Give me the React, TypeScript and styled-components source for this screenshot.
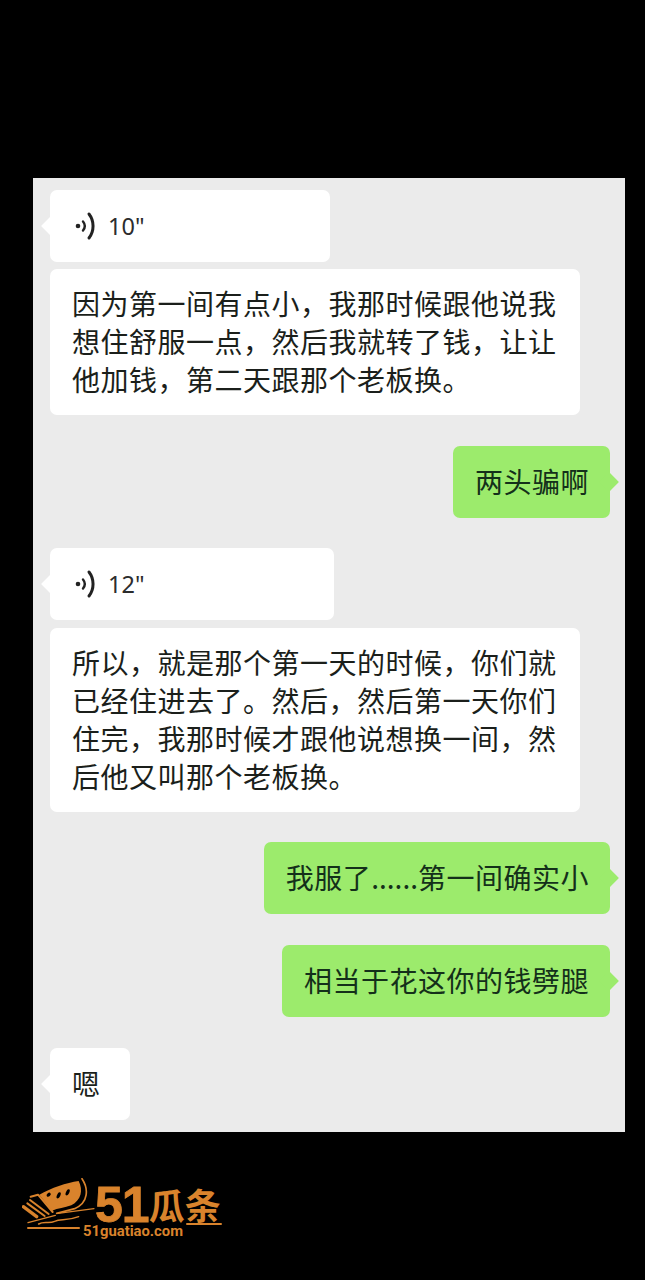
import React from "react";
import styled, { createGlobalStyle, css } from "styled-components";

const Global = createGlobalStyle`
  html, body {
    margin: 0;
    background: #000;
  }
`;

const Page = styled.div`
  width: 645px;
  height: 1280px;
  padding: 178px 20px 0 33px;
  box-sizing: border-box;
  background: #000;
  overflow: hidden;
`;

const Chat = styled.div`
  height: 954px;
  padding: 12px 15px 0 17px;
  box-sizing: border-box;
  background: #ebebeb;
  display: flex;
  flex-direction: column;
`;

const Row = styled.div<{ $mine?: boolean; $gap: number }>`
  display: flex;
  justify-content: ${(p) => (p.$mine ? "flex-end" : "flex-start")};
  margin-top: ${(p) => p.$gap}px;
`;

const Bubble = styled.div<{ $mine?: boolean; $width?: number; $tail?: boolean }>`
  position: relative;
  box-sizing: border-box;
  min-height: 72px;
  width: ${(p) => (p.$width ? `${p.$width}px` : "auto")};
  padding: 15px 21px 17px 22px;
  display: flex;
  align-items: center;
  border-radius: 7px;
  font-family: "Noto Sans CJK SC", "Noto Sans", sans-serif;
  font-size: 28px;
  font-weight: 400;
  letter-spacing: 0.5px;
  line-height: 38px;
  color: ${(p) => (p.$mine ? "#14301a" : "#1b1f1b")};
  background: ${(p) => (p.$mine ? "#9ceb6c" : "#fff")};
  ${(p) =>
    p.$tail &&
    css`
      &::after {
        content: "";
        position: absolute;
        top: 29px;
        width: 14px;
        height: 14px;
        background: inherit;
        transform: rotate(45deg);
        ${p.$mine ? "right: -6px;" : "left: -6px;"}
      }
    `}
`;

const Dots = styled.span`
  letter-spacing: 0;
`;

const VoiceLength = styled.span`
  margin: 2px 0 0 12px;
  font-family: "Noto Sans", sans-serif;
  font-size: 23.5px;
  letter-spacing: 0;
  line-height: 38px;
  color: #2c2c2c;
`;

const VoiceGlyph = styled.svg`
  margin-top: 2px;
  flex-shrink: 0;
`;

const Footer = styled.div`
  margin: 46px 0 0 -11px;
  width: 202px;
`;

const LogoTop = styled.div`
  display: flex;
  align-items: center;
  height: 47px;
  white-space: nowrap;
  color: #d9832c;
`;

const LogoNumber = styled.span`
  font-family: "Liberation Sans", sans-serif;
  font-size: 50px;
  font-weight: 700;
  letter-spacing: -1px;
  line-height: 47px;
  margin-top: 7px;
  -webkit-text-stroke: 0.8px #d9832c;
`;

const LogoName = styled.span`
  font-family: "Noto Sans CJK SC", sans-serif;
  font-size: 36px;
  font-weight: 700;
  line-height: 47px;
  margin-top: 6px;
`;

const LogoBottom = styled.div`
  display: flex;
  align-items: center;
  gap: 3px;
  margin: 0 0 0 5px;
  color: #d9832c;
`;

const LogoRule = styled.div<{ $width: number; $lift: number }>`
  width: ${(p) => p.$width}px;
  height: 2px;
  transform: translateY(-${(p) => p.$lift}px);
  background: #d9832c;
  border-radius: 1px;
`;

const LogoDomain = styled.span`
  font-family: "Roboto", "Liberation Sans", sans-serif;
  font-size: 14.8px;
  font-weight: 700;
  line-height: 12px;
`;

const VoiceIcon = () => (
  <VoiceGlyph width="24" height="30" viewBox="0 0 24 30" fill="none" stroke="#222" strokeLinecap="round">
    <circle cx="6" cy="15" r="2.3" fill="#222" stroke="none" />
    <path d="M11 10.5c2.2 2.7 2.2 6.3 0 9" strokeWidth="2.4" />
    <path d="M17 3c5.4 7 5.4 17 0 24" strokeWidth="3" />
  </VoiceGlyph>
);

const LogoMark = () => (
  <svg width="73" height="47" viewBox="12 18 219 141" style={{ flexShrink: 0 }}>
    <path d="M64 68 C100 48 145 32 182 27 C196 55 190 84 160 100 C140 108 120 108 102 116 Z" fill="#d9832c" />
    <ellipse cx="92" cy="68" rx="5" ry="7" fill="#000" transform="rotate(50 92 68)" />
    <ellipse cx="122" cy="70" rx="5" ry="10" fill="#000" transform="rotate(25 122 70)" />
    <ellipse cx="149" cy="61" rx="5" ry="10" fill="#000" transform="rotate(25 149 61)" />
    <g fill="none" stroke="#d9832c" strokeLinecap="round" strokeLinejoin="round">
      <path d="M192 20 C212 50 212 92 170 110 L116 124" strokeWidth="5" />
      <path d="M120 124 L228 110" strokeWidth="3.5" />
      <path d="M38 74 L60 68 L104 120" strokeWidth="6" />
      <path d="M36 84 L92 126" strokeWidth="6" />
      <path d="M28 94 L80 132" strokeWidth="6" />
      <path d="M16 104 L56 134" strokeWidth="10" />
      <path d="M30 152 L112 130" strokeWidth="4" />
      <path d="M62 156 C78 146 92 156 110 148 C128 140 146 148 182 134" strokeWidth="4.5" />
    </g>
  </svg>
);

export default function App() {
  return (
    <Page>
      <Global />
      <Chat>
        <Row $gap={0}>
          <Bubble $width={280} $tail>
            <VoiceIcon />
            <VoiceLength>10"</VoiceLength>
          </Bubble>
        </Row>
        <Row $gap={7}>
          <Bubble $width={530}>
            因为第一间有点小，我那时候跟他说我想住舒服一点，然后我就转了钱，让让他加钱，第二天跟那个老板换。
          </Bubble>
        </Row>
        <Row $gap={31} $mine>
          <Bubble $mine $tail>两头骗啊</Bubble>
        </Row>
        <Row $gap={30}>
          <Bubble $width={284} $tail>
            <VoiceIcon />
            <VoiceLength>12"</VoiceLength>
          </Bubble>
        </Row>
        <Row $gap={8}>
          <Bubble $width={530}>
            所以，就是那个第一天的时候，你们就已经住进去了。然后，然后第一天你们住完，我那时候才跟他说想换一间，然后他又叫那个老板换。
          </Bubble>
        </Row>
        <Row $gap={30} $mine>
          <Bubble $mine $tail>
            <span>我服了<Dots>......</Dots>第一间确实小</span>
          </Bubble>
        </Row>
        <Row $gap={31} $mine>
          <Bubble $mine $tail>相当于花这你的钱劈腿</Bubble>
        </Row>
        <Row $gap={31}>
          <Bubble $width={80} $tail>嗯</Bubble>
        </Row>
      </Chat>
      <Footer>
        <LogoTop>
          <LogoMark />
          <LogoNumber>51</LogoNumber>
          <LogoName>瓜条</LogoName>
        </LogoTop>
        <LogoBottom>
          <LogoRule $width={53} $lift={3} />
          <LogoDomain>51guatiao.com</LogoDomain>
          <LogoRule $width={36} $lift={7} />
        </LogoBottom>
      </Footer>
    </Page>
  );
}
